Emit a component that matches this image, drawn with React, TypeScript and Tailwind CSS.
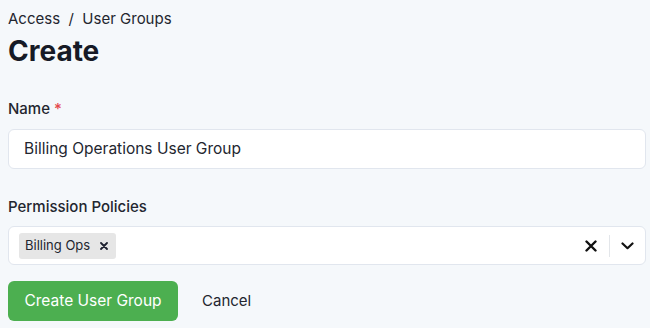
import React from "react";

export default function App() {
  return (
    <div className="min-h-[328px] w-[650px] bg-[#f5f8fb] pl-[8px] pr-[4px] pt-[8px] text-[#1e2130]" style={{ fontFamily: "Inter, 'Noto Sans', sans-serif" }}>
      <div className="text-[15px] leading-[22px] text-[#23262f]">Access&nbsp; / &nbsp;User Groups</div>
      <h1 className="mt-[3px] text-[28px] font-bold leading-[36px] text-[#161a26]">Create</h1>
      <div className="mt-[30px]">
        <label className="block text-[15px] font-medium leading-[20px] text-[#23262f]">
          Name <span className="text-[#e5484d]">*</span>
        </label>
        <div className="mt-[10px] flex h-[40px] items-center rounded-[6px] border border-[#e1e6ee] bg-white px-[15px] text-[15.5px] text-[#23262f]">
          Billing Operations User Group
        </div>
      </div>
      <div className="mt-[28px]">
        <label className="block text-[15px] font-medium leading-[20px] text-[#23262f]">Permission Policies</label>
        <div className="mt-[9px] flex h-[39px] items-center rounded-[6px] border border-[#e1e6ee] bg-white pl-[10px] pr-[8px]">
          <div className="flex h-[26px] items-center rounded-[3px] bg-[#e6e6e6] pl-[6px] pr-[8px] text-[13px] text-[#23262f]">
            Billing Ops
            <svg className="ml-[10px]" width="8" height="8" viewBox="0 0 8 8">
              <path d="M1 1L7 7M7 1L1 7" stroke="#1e2130" strokeWidth="1.8" strokeLinecap="round" />
            </svg>
          </div>
          <div className="flex-1" />
          <svg width="12" height="12" viewBox="0 0 12 12" className="mr-[12px]">
            <path d="M1.5 1.5L10.5 10.5M10.5 1.5L1.5 10.5" stroke="#111" strokeWidth="2.4" strokeLinecap="round" />
          </svg>
          <div className="h-[22px] w-px bg-[#e3e6ea]" />
          <svg width="13" height="8" viewBox="0 0 13 8" className="ml-[11px] mr-[3px]">
            <path d="M1.5 1.5L6.5 6.2L11.5 1.5" stroke="#111" strokeWidth="2.2" fill="none" strokeLinecap="round" strokeLinejoin="round" />
          </svg>
        </div>
      </div>
      <div className="mt-[16px] flex items-center">
        <button className="h-[40px] w-[170px] rounded-[6px] bg-[#4caf50] text-[15.5px] font-normal text-white">Create User Group</button>
        <button className="ml-[24px] text-[15px] text-[#23262f]">Cancel</button>
      </div>
    </div>
  );
}
